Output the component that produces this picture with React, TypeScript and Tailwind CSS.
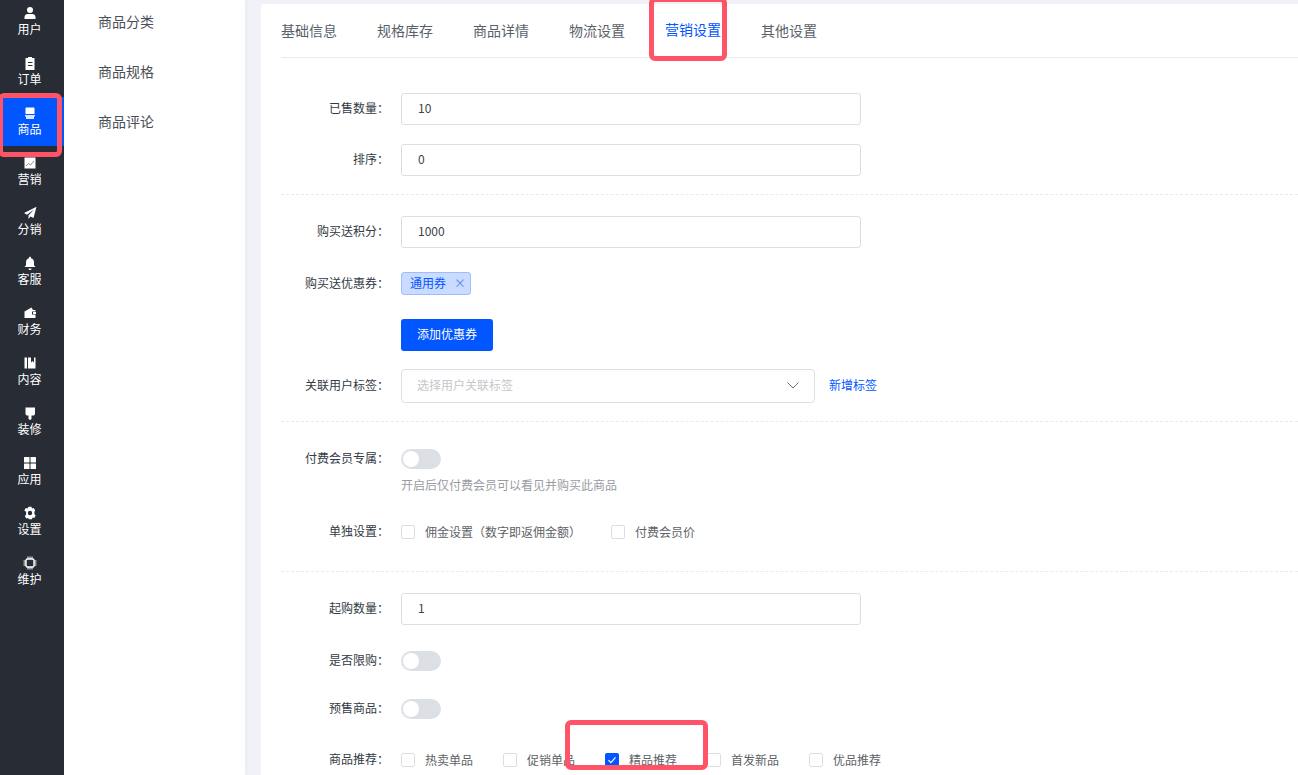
import React from "react";

const font = { fontFamily: '"Noto Sans CJK SC", "Noto Sans", sans-serif' };

const icons: Record<string, React.ReactNode> = {
  user: <><circle cx="7" cy="4" r="3" /><path d="M1.500 13v-2c0-2 1.800-3 3-3h5c1.200 0 3 1 3 3v2z" /></>,
  order: <path fillRule="evenodd" d="M5 1h4v1h2.500v12h-9V2H5zM5 6v1h4.500V6zM5 9v1h4.500V9z" />,
  goods: <><path d="M2.500 2.500c0-.6.5-1 1-1h7c.5 0 1 .4 1 1V8h-9z" /><path d="M2 9h10v1.500h-1V13H3v-2.500H2z" opacity=".85" /></>,
  chart: <><rect x="1.500" y="1.500" width="11" height="11" /><path d="M3 10l2.500-2.500 2 1.500L11 5" fill="none" stroke="#8a8f99" strokeWidth="1" /></>,
  send: <path d="M13.500.8L1 7l3 1.800L11 3.500 5.500 9.500v3.500l2-2.500 3 1.500z" />,
  bell: <path d="M7 .8c.6 0 1 .4 1 1v.5c2 .5 3 2 3 4v3l1.500 1.700H1.500L3 9.300v-3c0-2 1-3.500 3-4v-.5c0-.6.4-1 1-1zM5.500 12.500h3c0 1-.7 1.500-1.500 1.500s-1.500-.5-1.500-1.500z" />,
  wallet: <path fillRule="evenodd" d="M1.500 5.500L8.500 1.500 10 4h2.500v1.500H9v3h3.500V12h-11zM10 6h3v2h-3z" />,
  book: <path fillRule="evenodd" d="M1.500 1.500h11v11h-11zM4 1.500v11h1v-11zM8 1.500v5l1.500-1.500L11 6.500v-5z" />,
  brush: <path d="M2.500 1.500h9.500v6.500l-1 1.500H8.500V13l-1.500 1L5.500 13V9.500H3.500l-1-1.500z" />,
  apps: <><rect x="1" y="1" width="5.500" height="5.500" rx=".5" /><rect x="7.500" y="1" width="5.500" height="5.500" rx=".5" /><rect x="1" y="7.500" width="5.500" height="5.500" rx=".5" /><rect x="7.500" y="7.500" width="5.500" height="5.500" rx=".5" /></>,
  gear: <path fillRule="evenodd" d="M5.500.8h3l.5 1.700 1.700-.5 1.500 2.500L11.400 5.800v2.400l1.300 1.300-1.500 2.500-1.700-.5-.5 1.700h-3L5 12l-1.700.5-1.500-2.500 1.300-1.300V5.800L1.300 4.500 2.800 2l1.700.5zM7 4.800a2.200 2.200 0 1 0 0 4.400 2.200 2.200 0 0 0 0-4.400z" />,
  chip: <><rect x="3" y="3" width="8" height="8" rx="1.500" fill="none" stroke="#fff" strokeWidth="1.400" /><path d="M5 .5v2.500M7 .5v2.500M9 .5v2.500M5 11v2.500M7 11v2.500M9 11v2.500M.5 5H3M.5 7H3M.5 9H3M11 5h2.500M11 7h2.500M11 9h2.500" stroke="#fff" strokeWidth="1" /></>,
};

const nav = [
  ["user", "用户"], ["order", "订单"], ["goods", "商品"], ["chart", "营销"], ["send", "分销"], ["bell", "客服"],
  ["wallet", "财务"], ["book", "内容"], ["brush", "装修"], ["apps", "应用"], ["gear", "设置"], ["chip", "维护"],
];

function Row({ label, className, children }: { label?: string; className?: string; children: React.ReactNode }) {
  return (
    <div className={`flex items-center ${className ?? ""}`}>
      <div className="w-[120px] shrink-0 pb-[2px] pr-3 text-right text-xs text-[#333a45]">{label ? `${label}：` : ""}</div>
      {children}
    </div>
  );
}

function TextInput({ value }: { value: string }) {
  return (
    <div className="flex h-8 w-[460px] items-center rounded-[3px] border border-[#dcdee2] pb-[2px] pl-4 text-xs text-[#3d4249]">{value}</div>
  );
}

function Toggle() {
  return (
    <div className="flex h-5 w-10 items-center rounded-full bg-[#dcdfe6] pl-[2px]">
      <div className="h-4 w-4 rounded-full bg-white" />
    </div>
  );
}

function Check({ label, checked, w }: { label: string; checked?: boolean; w: string }) {
  return (
    <div className={`flex items-center ${w}`}>
      {checked ? (
        <div className="flex h-[14px] w-[14px] items-center justify-center rounded-[2px] bg-[#0256ff]">
          <svg width="10" height="10" viewBox="0 0 10 10"><path d="M1.500 5.200l2.400 2.400L8.500 2.400" fill="none" stroke="#fff" strokeWidth="1.200" /></svg>
        </div>
      ) : (
        <div className="h-[14px] w-[14px] rounded-[2px] border border-[#dcdee2] bg-white" />
      )}
      <span className="ml-[10px] text-xs text-[#606266]">{label}</span>
    </div>
  );
}

function Divider({ className }: { className: string }) {
  return <div className={`border-t border-dashed border-[#e8eaee] ${className}`} />;
}

export default function App() {
  const tabs = ["基础信息", "规格库存", "商品详情", "物流设置", "营销设置", "其他设置"];
  return (
    <div className="relative flex h-[775px] w-full overflow-hidden bg-[#f0f2f7]" style={font}>
      <aside className="w-16 shrink-0 bg-[#282c35]">
        <div className="-mt-[3px]">
          {nav.map(([icon, text]) => {
            const active = text === "商品";
            return (
              <div key={text} className="h-[50px]">
                <div className={`flex h-[49px] flex-col items-center pr-[5px] pt-[9px] text-white ${active ? "bg-[#0256ff]" : ""}`}>
                  <svg width="14" height="14" viewBox="0 0 14 14" fill="#fff">{icons[icon]}</svg>
                  <span className="text-xs leading-[18px]">{text}</span>
                </div>
              </div>
            );
          })}
        </div>
      </aside>

      <nav className="w-[181px] shrink-0 bg-white pl-[34px] shadow-[1px_0_4px_rgba(0,0,0,0.04)]">
        {["商品分类", "商品规格", "商品评论"].map((t) => (
          <div key={t} className="flex h-[50px] -translate-y-[4px] items-center text-sm text-[#4a4f57]">{t}</div>
        ))}
      </nav>

      <main className="ml-4 mt-1 flex-1 rounded-tl-[3px] bg-white pl-5">
        <div className="flex h-[54px] gap-10 border-b border-[#e8eaee]">
          {tabs.map((t, i) => (
            <div key={t} className={`flex h-[54px] items-center pb-[2px] text-sm ${i === 4 ? "border-b-2 border-[#0256ff] text-[#0256ff]" : "text-[#5a5f68]"}`}>{t}</div>
          ))}
        </div>

        <Row label="已售数量" className="mt-[35px]"><TextInput value="10" /></Row>
        <Row label="排序" className="mt-[19px]"><TextInput value="0" /></Row>
        <Divider className="mt-[18px]" />
        <Row label="购买送积分" className="mt-[21px]"><TextInput value="1000" /></Row>
        <Row label="购买送优惠券" className="mt-6">
          <div className="flex h-[23px] w-[70px] items-center rounded-[3px] border border-[#9dbdff] bg-[#c9dbff] pb-[1px] pl-2 text-xs text-[#0256ff]">
            通用券<span className="ml-2 text-[#5a86e8]">×</span>
          </div>
        </Row>
        <Row className="mt-6">
          <div className="flex h-8 w-[92px] items-center justify-center rounded-[3px] bg-[#0256ff] pb-[2px] text-xs text-white">添加优惠券</div>
        </Row>
        <Row label="关联用户标签" className="mt-[18px]">
          <div className="flex h-[34px] w-[414px] items-center justify-between rounded-[4px] border border-[#dcdfe6] pb-[2px] pl-[15px] pr-[15px] text-xs text-[#c4c7cc]">
            选择用户关联标签
            <svg width="12" height="12" viewBox="0 0 12 12"><path d="M.500 3.500L6 9l5.500-5.500" fill="none" stroke="#70747a" strokeWidth="1" /></svg>
          </div>
          <span className="mb-[2px] ml-[14px] text-xs text-[#0256ff]">新增标签</span>
        </Row>
        <Divider className="mt-[18px]" />
        <Row label="付费会员专属" className="mt-[27px]"><Toggle /></Row>
        <div className="ml-[120px] mt-2 text-xs leading-4 text-[#999ca3]">开启后仅付费会员可以看见并购买此商品</div>
        <Row label="单独设置" className="mt-[30px]">
          <Check label="佣金设置（数字即返佣金额）" w="w-[210px]" />
          <Check label="付费会员价" w="w-[100px]" />
        </Row>
        <Divider className="mt-[30px]" />
        <Row label="起购数量" className="mt-[21px]"><TextInput value="1" /></Row>
        <Row label="是否限购" className="mt-[26px]"><Toggle /></Row>
        <Row label="预售商品" className="mt-[28px]"><Toggle /></Row>
        <Row label="商品推荐" className="mt-8">
          <Check label="热卖单品" w="w-[102px]" />
          <Check label="促销单品" w="w-[102px]" />
          <Check label="精品推荐" checked w="w-[102px]" />
          <Check label="首发新品" w="w-[102px]" />
          <Check label="优品推荐" w="w-[102px]" />
        </Row>
      </main>

      <div className="absolute -left-[2px] top-[93px] h-16 w-16 rounded-[6px] border-[5px] border-[#ff5468]" />
      <div className="absolute -top-[3px] left-[649px] h-16 w-[78px] rounded-[6px] border-[5px] border-[#ff5468]" />
      <div className="absolute left-[565px] top-[720px] h-[50px] w-[143px] rounded-[6px] border-[5px] border-[#ff5468]" />
    </div>
  );
}
